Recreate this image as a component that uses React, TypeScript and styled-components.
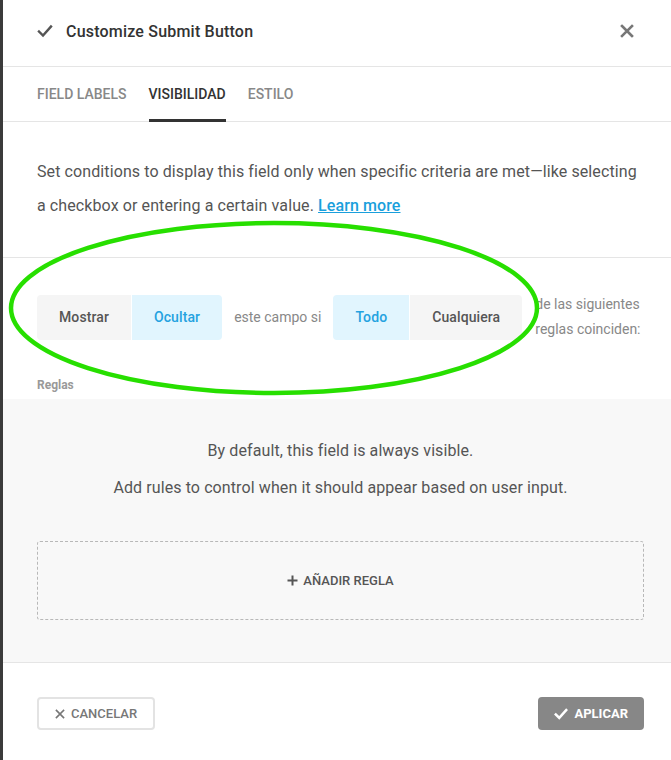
import React from "react";
import styled, { createGlobalStyle } from "styled-components";

const GlobalStyle = createGlobalStyle`
  html, body { margin: 0; padding: 0; }
  body {
    background: #3b3b3b;
    font-family: Roboto, "Liberation Sans", Arial, sans-serif;
    -webkit-font-smoothing: antialiased;
  }
  * { box-sizing: border-box; }
`;

const Page = styled.div`
  position: relative;
  width: 671px;
  height: 760px;
  padding-left: 3px;
  overflow: hidden;
`;

const Panel = styled.div`
  background: #fff;
  height: 760px;
  display: flex;
  flex-direction: column;
`;

const Header = styled.div`
  height: 67px;
  display: flex;
  align-items: center;
  padding: 0 34px 4px;
  border-bottom: 1px solid #e5e5e5;
  gap: 13px;
`;

const Title = styled.h1`
  margin: 0;
  flex: 1;
  font-size: 16px;
  font-weight: 500;
  letter-spacing: 0.2px;
  color: #333;
`;

const CloseButton = styled.button`
  border: 0;
  background: none;
  padding: 0;
  margin-right: 3px;
  display: flex;
  cursor: pointer;
`;

const Tabs = styled.div`
  height: 55px;
  display: flex;
  gap: 22px;
  padding: 0 34px;
  border-bottom: 1px solid #e5e5e5;
`;

const Tab = styled.div<{ $active?: boolean }>`
  display: flex;
  align-items: center;
  padding-top: 1px;
  font-size: 14px;
  font-weight: 500;
  text-transform: uppercase;
  color: ${(p) => (p.$active ? "#333" : "#888")};
  border-bottom: 3px solid ${(p) => (p.$active ? "#333" : "transparent")};
  margin-bottom: -1px;
`;

const Intro = styled.div`
  padding: 33px 34px 34px;
  border-bottom: 1px solid #e5e5e5;
  font-size: 16px;
  line-height: 34px;
  letter-spacing: 0.1px;
  color: #555;
`;

const LearnMore = styled.a`
  color: #1a9fdc;
  font-weight: 500;
  text-decoration: underline;
`;

const Conditions = styled.div`
  padding: 34px 0 0 34px;
`;

const ConditionRow = styled.div`
  display: flex;
  align-items: center;
  gap: 12px;
`;

const Segmented = styled.div`
  display: flex;
  flex-shrink: 0;
  gap: 1px;
  border-radius: 4px;
  overflow: hidden;
  height: 45px;
`;

const Segment = styled.div<{ $active?: boolean }>`
  display: flex;
  align-items: center;
  padding: 0 22px;
  font-size: 14px;
  font-weight: 500;
  letter-spacing: 0.1px;
  background: ${(p) => (p.$active ? "#e1f5fe" : "#f5f5f5")};
  color: ${(p) => (p.$active ? "#24a2e0" : "#555")};
`;

const Inline = styled.span`
  font-size: 14px;
  color: #888;
  line-height: 25px;
  white-space: nowrap;
  flex-shrink: 0;
`;

const Trailing = styled.span`
  flex: 1;
  min-width: 0;
  margin-left: 1px;
  font-size: 14px;
  color: #888;
  line-height: 25px;
`;

const RulesLabel = styled.div`
  margin-top: 36px;
  font-size: 12px;
  font-weight: 700;
  color: #999;
  height: 21px;
`;

const RulesArea = styled.div`
  background: #f8f8f8;
  padding: 40px 27px 42px 34px;
  border-bottom: 1px solid #e5e5e5;
  display: flex;
  flex-direction: column;
  align-items: center;
`;

const Note = styled.p`
  margin: 0 0 13px;
  font-size: 16px;
  line-height: 24px;
  letter-spacing: 0.1px;
  color: #555;
  text-align: center;
`;

const AddRule = styled.div`
  margin-top: 28px;
  align-self: stretch;
  height: 79px;
  border: 1px dashed #b8b8b8;
  border-radius: 3px;
  display: flex;
  align-items: center;
  justify-content: center;
  gap: 5px;
  font-size: 13px;
  font-weight: 500;
  color: #555;
  text-transform: uppercase;
`;

const Footer = styled.div`
  padding: 34px 27px 0 34px;
  display: flex;
  justify-content: space-between;
`;

const Button = styled.button<{ $primary?: boolean }>`
  height: 33px;
  display: flex;
  align-items: center;
  gap: 6px;
  padding: 0 16px;
  border-radius: 4px;
  font-family: inherit;
  font-size: 13px;
  font-weight: ${(p) => (p.$primary ? 700 : 500)};
  text-transform: uppercase;
  cursor: pointer;
  border: ${(p) => (p.$primary ? "0" : "2px solid #e3e3e3")};
  background: ${(p) => (p.$primary ? "#878787" : "#fff")};
  color: ${(p) => (p.$primary ? "#fff" : "#777")};
`;

const Highlight = styled.svg`
  position: absolute;
  left: 8px;
  top: 219px;
  pointer-events: none;
`;

const Check = ({ size = 15, color = "#555", w = 2.6 }: { size?: number; color?: string; w?: number }) => (
  <svg width={size} height={size} viewBox="0 0 16 16">
    <polyline points="2,8.5 6,12.5 14,3.5" fill="none" stroke={color} strokeWidth={w} strokeLinecap="square" />
  </svg>
);

const Cross = ({ size = 13, color = "#777", w = 2.6 }: { size?: number; color?: string; w?: number }) => (
  <svg width={size} height={size} viewBox="0 0 14 14">
    <path d="M2 2 L12 12 M12 2 L2 12" stroke={color} strokeWidth={w} strokeLinecap="square" />
  </svg>
);

const Plus = () => (
  <svg width="11" height="11" viewBox="0 0 11 11">
    <path d="M5.5 0.5 V10.5 M0.5 5.5 H10.5" stroke="#555" strokeWidth="2" />
  </svg>
);

export default function App() {
  return (
    <Page>
      <GlobalStyle />
      <Panel>
        <Header>
          <Check size={16} color="#555" w={2.4} />
          <Title>Customize Submit Button</Title>
          <CloseButton aria-label="Cerrar">
            <Cross size={14} color="#777" w={2.6} />
          </CloseButton>
        </Header>
        <Tabs>
          <Tab>Field Labels</Tab>
          <Tab $active>Visibilidad</Tab>
          <Tab>Estilo</Tab>
        </Tabs>
        <Intro>
          Set conditions to display this field only when specific criteria are met—like selecting a
          checkbox or entering a certain value. <LearnMore href="#">Learn more</LearnMore>
        </Intro>
        <Conditions>
          <ConditionRow>
            <Segmented>
              <Segment>Mostrar</Segment>
              <Segment $active>Ocultar</Segment>
            </Segmented>
            <Inline>este campo si</Inline>
            <Segmented>
              <Segment $active>Todo</Segment>
              <Segment>Cualquiera</Segment>
            </Segmented>
            <Trailing>de las siguientes reglas coinciden:</Trailing>
          </ConditionRow>
          <RulesLabel>Reglas</RulesLabel>
        </Conditions>
        <RulesArea>
          <Note>By default, this field is always visible.</Note>
          <Note>Add rules to control when it should appear based on user input.</Note>
          <AddRule>
            <Plus />
            Añadir regla
          </AddRule>
        </RulesArea>
        <Footer>
          <Button>
            <Cross size={10} color="#777" w={2.2} />
            Cancelar
          </Button>
          <Button $primary>
            <Check size={14} color="#fff" w={2.8} />
            Aplicar
          </Button>
        </Footer>
      </Panel>
      <Highlight width="534" height="180" viewBox="0 0 534 180">
        <ellipse cx="266" cy="89" rx="263" ry="85" fill="none" stroke="#27df00" strokeWidth="4.5" />
      </Highlight>
    </Page>
  );
}
